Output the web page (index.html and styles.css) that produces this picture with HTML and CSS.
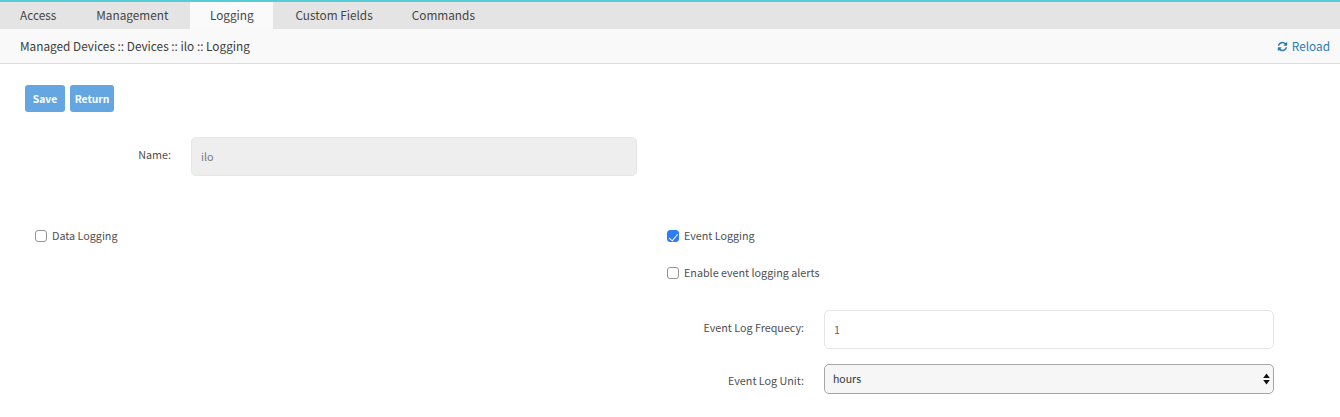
FILE: index.html
```html
<!DOCTYPE html>
<html lang="en">
<head>
<meta charset="utf-8">
<title>Logging</title>
<link rel="stylesheet" href="styles.css">
</head>
<body>
<nav class="tabs">
  <a class="tab">Access</a>
  <a class="tab">Management</a>
  <a class="tab active">Logging</a>
  <a class="tab tab-custom">Custom Fields</a>
  <a class="tab">Commands</a>
</nav>
<header class="crumbs">
  <span>Managed Devices :: Devices :: ilo :: Logging</span>
  <a class="reload">
    <svg class="reload-icon" viewBox="0 0 1792 1792"><path fill="currentColor" d="M1639 1056q0 5-1 7-64 268-268 434.5t-478 166.5q-146 0-282.5-55t-243.5-157l-129 129q-19 19-45 19t-45-19-19-45v-448q0-26 19-45t45-19h448q26 0 45 19t19 45-19 45l-137 137q71 66 161 102t187 36q134 0 250-65t186-179q11-17 53-117 8-23 30-23h192q13 0 22.5 9.5t9.5 22.5zm25-800v448q0 26-19 45t-45 19h-448q-26 0-45-19t-19-45 19-45l138-138q-148-137-349-137-134 0-250 65t-186 179q-11 17-53 117-8 23-30 23h-199q-13 0-22.5-9.5t-9.5-22.5v-7q65-268 270-434.5t480-166.5q146 0 284 55.5t245 156.5l130-129q19-19 45-19t45 19 19 45z"/></svg>
    Reload
  </a>
</header>
<main class="content">
  <div class="actions">
    <button class="btn" type="button">Save</button>
    <button class="btn btn-return" type="button">Return</button>
  </div>
  <div class="field name-field">
    <label class="label name-label">Name:</label>
    <input class="input input-disabled" type="text" value="ilo" disabled>
  </div>
  <div class="columns">
    <div class="col-left">
      <label class="check"><input type="checkbox"><span>Data Logging</span></label>
    </div>
    <div class="col-right">
      <label class="check"><input type="checkbox" checked><span>Event Logging</span></label>
      <label class="check check-second"><input type="checkbox"><span>Enable event logging alerts</span></label>
      <div class="field freq-field">
        <label class="label wide-label label-up">Event Log Frequecy:</label>
        <input class="input input-wide" type="text" value="1">
      </div>
      <div class="field unit-field">
        <label class="label wide-label label-down">Event Log Unit:</label>
        <div class="select-wrap">
          <select class="select"><option>hours</option></select>
          <svg class="select-arrows" viewBox="0 0 7 12"><path fill="#111" d="M3.5 0.5 6.8 5H0.2zM3.5 11.5 0.2 7H6.8z"/></svg>
        </div>
      </div>
    </div>
  </div>
</main>
</body>
</html>
```

FILE: styles.css
```css
* { box-sizing: border-box; }
html, body { margin: 0; padding: 0; background: #fff; }
body {
  font-family: "Noto Sans CJK JP", "Noto Sans", sans-serif;
  font-size: 12px;
  line-height: 16px;
  color: #444;
  overflow: hidden;
}
.tabs {
  display: flex;
  height: 29px;
  background: #e4e4e4;
  border-top: 2px solid #55cdd6;
}
.tab {
  padding: 5px 20px 0;
  font-size: 11.8px;
  color: #444;
}
.tab:nth-child(2) { margin-right: 2px; }
.tab.active { width: 83px; margin-right: 2px; padding-left: 19.5px; padding-right: 0; background: #fafafa; }
.tab-custom { padding-right: 19px; }
.crumbs {
  display: flex;
  justify-content: space-between;
  align-items: center;
  height: 35px;
  padding: 0 10px 0 20px;
  background: #f9f9f9;
  border-bottom: 1px solid #dcdcdc;
  font-size: 11.8px;
  color: #3c3c3c;
}
.reload { display: flex; align-items: center; gap: 4px; color: #2a7bb0; }
.reload-icon { width: 11px; height: 11px; }
.content { padding: 21px 25px 0; }
.actions { display: flex; gap: 5px; }
.btn {
  height: 27px;
  padding: 0 5px;
  min-width: 40px;
  border: 0;
  border-radius: 3px;
  background: #64a6e1;
  color: #fff;
  font: 600 10.3px/16px "Noto Sans CJK JP", "Noto Sans", sans-serif;
}
.btn-return { width: 44px; padding: 0; }
.field { display: flex; align-items: center; }
.label { color: #505050; font-size: 10.75px; text-align: right; }
.name-field { margin-top: 25px; }
.name-label { width: 146px; margin-right: 20px; margin-bottom: 4px; }
.label-up { margin-bottom: 4px; }
.label-down { margin-top: 4px; }
.input {
  height: 39px;
  padding: 0 9px;
  border: 1px solid #e6e6e6;
  border-radius: 5px;
  background: #fff;
  color: #666;
  font: 10.75px/16px "Noto Sans CJK JP", "Noto Sans", sans-serif;
}
.input-disabled { width: 446px; background: #eeeeee; color: #777; }
.input-wide { width: 450px; }
.columns { display: grid; grid-template-columns: 632px 1fr; margin-top: 50px; }
.col-left { padding-left: 10px; }
.col-right { padding-left: 10px; }
.check { display: flex; align-items: center; gap: 5px; height: 20px; font-size: 10.75px; color: #505050; }
.check-second { margin-top: 17px; }
.check input {
  appearance: none;
  position: relative;
  width: 12px;
  height: 12px;
  margin: 0;
  border: 1px solid #959595;
  border-radius: 3px;
  background: #fff;
}
.check input:checked { background: #2e7cf6; border-color: #2e7cf6; }
.check input:checked::before {
  content: "";
  position: absolute;
  left: 3px;
  top: 0.5px;
  width: 4px;
  height: 7.5px;
  border: solid #fff;
  border-width: 0 1.6px 1.6px 0;
  transform: rotate(40deg);
}
.wide-label { width: 137px; margin-right: 20px; }
.freq-field { margin-top: 27px; }
.unit-field { margin-top: 15px; }
.select-wrap { position: relative; width: 450px; height: 30px; }
.select {
  appearance: none;
  width: 100%;
  height: 100%;
  padding: 0 8px;
  border: 1px solid #a5a5a5;
  border-radius: 5px;
  background: #f6f6f6;
  color: #333;
  font: 10.5px/16px "Noto Sans CJK JP", "Noto Sans", sans-serif;
}
.select-arrows { position: absolute; right: 4px; top: 9px; width: 7px; height: 12px; }
```
